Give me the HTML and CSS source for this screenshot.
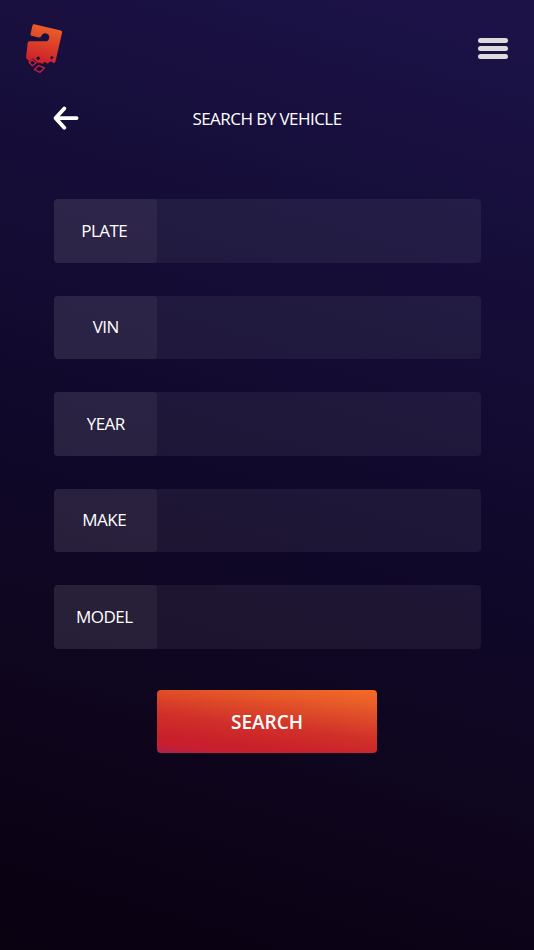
FILE: index.html
```html
<!DOCTYPE html>
<html lang="en">
<head>
  <meta charset="UTF-8" />
  <meta name="viewport" content="width=device-width, initial-scale=1.0" />
  <title>Search by Vehicle</title>
  <link rel="stylesheet" href="styles.css">
</head>
<body>
  <div class="app">
    <header class="topbar">
      <svg class="logo" width="40" height="52" viewBox="24 22 40 52">
        <defs>
          <linearGradient id="logoFill" gradientUnits="userSpaceOnUse" x1="50" y1="24" x2="40" y2="74">
            <stop offset="0" stop-color="#ed6428" />
            <stop offset="0.45" stop-color="#d93c29" />
            <stop offset="0.78" stop-color="#cc202c" />
            <stop offset="1" stop-color="#b52148" />
          </linearGradient>
        </defs>
        <path fill="url(#logoFill)" fill-rule="evenodd" d="M34.2 24.3 L60.9 30.5 Q62.5 31 62.1 32.6 L55.4 61.8 Q55 63.5 53.4 63 L50.6 61.3 L47.5 63.8 L44.8 61.8 L42.4 64 L39.8 62.4 L38.3 63.6 L35.8 60.8 L33 58.6 L29.6 61.2 L26.7 58.9 Q26 58.3 26.1 57.1 L27.7 42.8 Q28 41.3 29.5 41.3 L45.3 41.3 A4 4 0 1 0 41.7 35.4 Q40.7 37.9 38.6 37.4 L31.4 35.7 Q30.2 35.3 30.5 34 L32.6 25.3 Q32.9 24 34.2 24.3 Z M38.3 56.3 L40.3 58.3 L38.2 60.3 L36 58.3 Z M52 55.9 L53.6 57.6 L51.6 59.4 L50 57.5 Z" />
        <g fill="none" stroke="url(#logoFill)" stroke-width="1.4" stroke-linejoin="round">
          <path d="M29 62.3 L32.7 60 L36.2 62.7 L32.4 65.7 Z" />
          <path d="M38.6 65.6 L44.4 67.9 L40.1 72.3 L34.4 69.6 Z" />
        </g>
      </svg>
      <button class="menu-btn" aria-label="Menu">
        <span></span>
        <span></span>
        <span></span>
      </button>
    </header>

    <div class="title-row">
      <button class="back-btn" aria-label="Back">
        <svg width="26" height="24" viewBox="0 0 26 24">
          <path d="M11.3 2.4 L2.6 12.1 L11.3 21.7 M3 12.1 H23.6" />
        </svg>
      </button>
      <h1>SEARCH BY VEHICLE</h1>
    </div>

    <form class="search-form">
      <div class="field">
        <label for="plate">PLATE</label>
        <input id="plate" type="text" />
      </div>
      <div class="field">
        <label class="short" for="vin">VIN</label>
        <input id="vin" type="text" />
      </div>
      <div class="field">
        <label class="short" for="year">YEAR</label>
        <input id="year" type="text" />
      </div>
      <div class="field">
        <label for="make">MAKE</label>
        <input id="make" type="text" />
      </div>
      <div class="field">
        <label for="model">MODEL</label>
        <input id="model" type="text" />
      </div>
      <button class="search-btn" type="button">SEARCH</button>
    </form>
  </div>
</body>
</html>
```
FILE: styles.css
```css
* {
  box-sizing: border-box;
}
body {
  margin: 0;
  font-family: 'Open Sans', 'Noto Sans', sans-serif;
  color: #fff;
}
button {
  padding: 0;
  border: 0;
  background: none;
  font-family: inherit;
  color: inherit;
}
.app {
  height: 950px;
  overflow: hidden;
  background: linear-gradient(197deg, #1c1249 0%, #160e39 25%, #100829 54%, #0e051c 78%, #090010 100%);
}
.topbar {
  display: flex;
  justify-content: space-between;
  align-items: flex-start;
  height: 96px;
  padding: 22px 26px 0 24px;
}
.logo {
  display: block;
}
.menu-btn {
  display: flex;
  flex-direction: column;
  gap: 3px;
  margin-top: 16px;
}
.menu-btn span {
  width: 30px;
  height: 5px;
  border-radius: 2.5px;
  background: #dcdadb;
}
.title-row {
  display: grid;
  grid-template-columns: 54px 1fr 54px;
  align-items: center;
  height: 44px;
  padding: 0 53px;
}
.back-btn svg {
  display: block;
  fill: none;
  stroke: #fff;
  stroke-width: 3.8;
  stroke-linecap: round;
  stroke-linejoin: round;
}
h1 {
  margin: 1px 0 0;
  text-align: center;
  font-size: 17px;
  font-weight: 400;
  letter-spacing: -0.55px;
}
.search-form {
  display: flex;
  flex-direction: column;
  gap: 33px;
  padding: 59.4px 53.5px 0;
}
.field {
  display: flex;
  height: 63.5px;
  border-radius: 4px;
  background: rgba(255, 255, 255, 0.06);
}
.field label {
  display: flex;
  align-items: center;
  justify-content: center;
  width: 103.5px;
  padding: 0 2px 2px 0;
  border-radius: 4px;
  background: rgba(255, 255, 255, 0.05);
  font-size: 17px;
  letter-spacing: -0.5px;
}
.field .short {
  padding: 0 0 2px 1px;
}
.field input {
  flex: 1;
  min-width: 0;
  padding: 0 16px;
  border: 0;
  outline: none;
  background: none;
  font: inherit;
  color: inherit;
}
.search-btn {
  align-self: center;
  width: 220.5px;
  height: 63.5px;
  margin-top: 8px;
  border-radius: 4px;
  background: linear-gradient(187deg, #f46c25 0%, #e65a28 20%, #d03029 56%, #c9202b 80%, #c71f2f 90%, #a62350 100%);
  font-size: 19px;
  font-weight: 600;
}
```
